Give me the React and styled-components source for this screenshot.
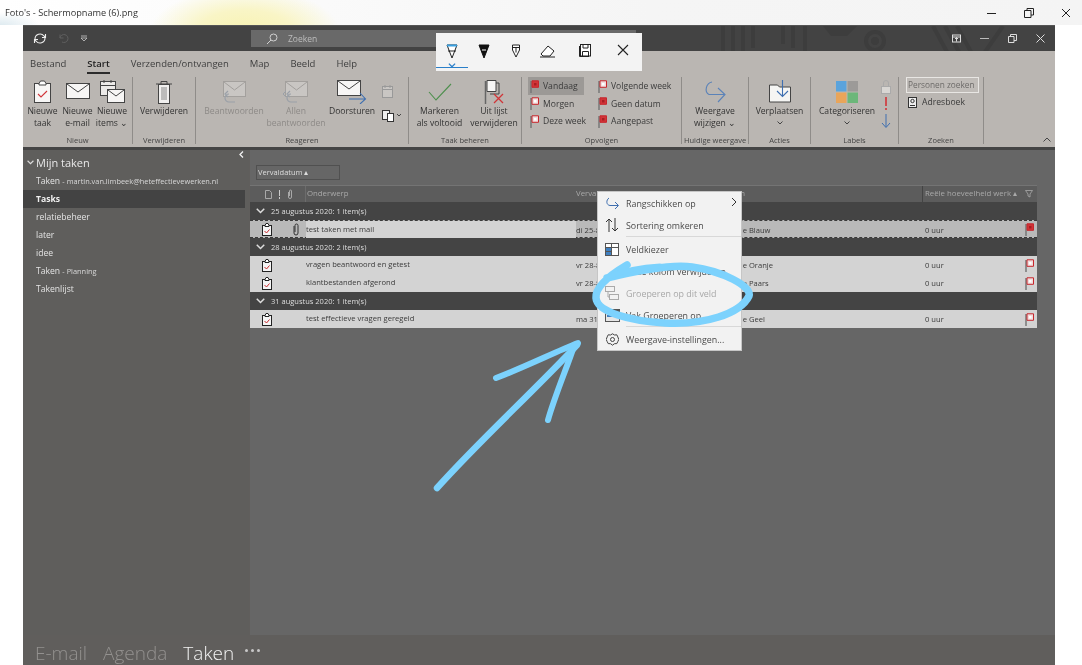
import React from "react";
import styled, { createGlobalStyle } from "styled-components";

const Global = createGlobalStyle`
  html, body { margin: 0; padding: 0; background: #fff; }
  body { font-family: "Open Sans", "Noto Sans", sans-serif; }
  svg { display: block; }
`;

const Page = styled.div`
  position: relative; width: 1082px; height: 665px; overflow: hidden; background: #fff;
  display: flex; flex-direction: column; filter: blur(0.3px);
`;
const TitleBar = styled.div`
  height: 25px; flex: none; display: flex; align-items: center; justify-content: space-between;
  padding: 0 11px 0 5px; color: #333; font-size: 9.2px; box-sizing: border-box;
  background:
    radial-gradient(ellipse 95px 44px at 245px 32px, #f8f3b2 0%, #f9f5c6 50%, rgba(255,255,255,0) 100%),
    radial-gradient(ellipse 40px 14px at 0 26px, #dce9ef, rgba(255,255,255,0)),
    linear-gradient(90deg, #fff, #f5f5f5 60%, #f4f4f4);
`;
const WinControls = styled.div`display: flex; gap: ${p => p.$gap}px; align-items: center;`;
const Outlook = styled.div`
  flex: 1; margin: 0 27px 0 23px; display: flex; flex-direction: column; min-height: 0; background: #605e5c;
`;
const Strip = styled.div`
  position: relative; height: 26px; flex: none; background: #434343; display: flex; align-items: center; overflow: hidden;
  border-top: 1px solid #555; box-sizing: border-box;
`;
const StripDecor = styled.svg`position: absolute; left: 660px; top: 0;`;
const Qat = styled.div`display: flex; align-items: center; gap: 11px; width: 228px; padding-left: 10px; box-sizing: border-box; flex: none;`;
const Search = styled.div`
  width: 385px; height: 17px; background: #696969; color: #bdbdbd; font-size: 8.5px; display: flex; align-items: center;
  padding-left: 15px; gap: 10px; box-sizing: border-box; flex: none; position: relative;
`;
const StripRight = styled.div`margin-left: auto; padding-right: 10px; display: flex; gap: 19px; align-items: center; position: relative;`;
const Tabs = styled.div`
  height: 25px; flex: none; background: #bab6b2; display: flex; align-items: center; padding-left: 7px; gap: 21px; font-size: 9.5px; color: #3a3a3a;
`;
const Tab = styled.div`
  position: relative; font-weight: ${p => p.$active ? 600 : 400}; color: ${p => p.$active ? "#222" : "#3e3e3e"};
  ${p => p.$active && `&::after { content: ""; position: absolute; left: 0; right: 0; bottom: -4px; height: 2px; background: #2b2b2b; }`}
`;
const Ribbon = styled.div`
  height: 71px; flex: none; background: #bab6b2; display: flex; position: relative; border-bottom: 3px solid #454545;
`;
const Group = styled.div`
  width: ${p => p.$w}px; flex: none; box-sizing: border-box; display: flex; flex-direction: column; margin: 1px 0 3px;
  border-right: 1px solid #8f8c89;
`;
const GroupBody = styled.div`
  flex: 1; display: flex; flex-direction: ${p => p.$col ? "column" : "row"}; padding-left: ${p => p.$pad || 0}px; min-height: 0;
`;
const GroupLabel = styled.div`height: 12px; text-align: center; font-size: 7.5px; line-height: 16px; color: #444; white-space: nowrap;`;
const BigBtn = styled.div`
  width: ${p => p.$w}px; flex: none; display: flex; flex-direction: column; align-items: center; text-align: center; margin-left: ${p => p.$ml || 0}px;
  color: ${p => p.$off ? "#8d8a87" : "#333"}; font-size: 8.6px; line-height: 12.5px; white-space: nowrap;
`;
const BigIcon = styled.div`height: 25.5px; padding-top: 2px; flex: none; display: flex; align-items: center; justify-content: center; box-sizing: content-box;`;
const Caret = styled.div`height: 12.5px; display: flex; align-items: center;`;
const SmallStack = styled.div`
  display: flex; flex-direction: column; align-items: ${p => p.$align || "flex-start"}; gap: ${p => p.$gap || 0}px; padding-top: ${p => p.$top || 0}px;
  ${p => p.$w ? `width: ${p.$w}px;` : ""}
`;
const FlagCols = styled.div`display: flex; padding-left: 6px; gap: 6px;`;
const FlagItem = styled.div`
  height: 18px; margin-bottom: -0.5px; display: flex; align-items: center; gap: 4px; font-size: 8.6px; color: #3a3a3a; white-space: nowrap;
  width: ${p => p.$w}px; padding-left: 2px; box-sizing: border-box;
  background: ${p => p.$on ? "#9c9996" : "transparent"};
`;
const PeopleBox = styled.div`
  width: 73px; height: 16px; margin: 0 0 0 7px; box-sizing: border-box; border: 1px solid #e8e6e3; background: #c0bcb8;
  color: #6d6b69; font-size: 8.3px; line-height: 14px; padding-left: 1px; white-space: nowrap; overflow: hidden;
`;
const AddrBook = styled.div`display: flex; gap: 5px; align-items: center; margin: 3px 0 0 9px; font-size: 8.6px; color: #3a3a3a;`;
const Collapse = styled.div`position: absolute; right: 4px; bottom: 5px;`;

const Body = styled.div`flex: 1; display: flex; min-height: 0;`;
const Nav = styled.nav`width: 226px; flex: none; background: #5f5e5c; color: #eee; position: relative; padding-top: 3px; margin-right: 1px;`;
const NavCollapse = styled.div`position: absolute; right: 5px; top: 1px;`;
const NavHead = styled.div`display: flex; align-items: center; gap: 2px; height: 19px; padding-left: 4px; font-size: 11px; color: #e8e8e8;`;
const NavItem = styled.div`
  height: 18px; line-height: 18px; padding-left: 13px; width: 222px; box-sizing: border-box; font-size: 8.6px; white-space: nowrap;
  background: ${p => p.$on ? "#434343" : "transparent"}; font-weight: ${p => p.$on ? 700 : 400};
  color: ${p => p.$on ? "#f0f0f0" : "#e4e4e4"};
`;
const NavSub = styled.span`font-size: 7.4px; color: #d8d8d8;`;
const Main = styled.main`flex: 1; background: #666; min-width: 0; padding-top: 15px;`;
const GroupBy = styled.div`
  margin-left: 6px; width: 84px; height: 15px; border: 1px solid #505050; box-sizing: border-box; color: #ddd; font-size: 7.5px; line-height: 13px; padding-left: 1px;
`;
const Table = styled.div`margin-top: 5px; width: 787px;`;
const cols = "56px 270px 137px 212px 100px 12px";
const HeadRow = styled.div`
  display: grid; grid-template-columns: ${cols}; height: 17px; align-items: center; background: #5c5c5c; border-top: 1px solid #747474; box-sizing: border-box;
  color: #a9a9a9; font-size: 7.8px;
`;
const HeadIcons = styled.div`display: flex; align-items: center; padding-left: 15px; gap: 6px; height: 100%; border-right: 1px solid #6c6c6c; box-sizing: border-box;`;
const HeadCell = styled.div`
  padding-left: ${p => p.$line ? 2 : p.$pad ?? 1}px; white-space: nowrap; height: 100%; line-height: 15px; box-sizing: border-box;
  margin-left: ${p => p.$ml || 0}px;
  ${p => p.$line ? "margin-left: -3px; border-left: 1px solid #444;" : ""}
`;
const DayRow = styled.div`
  height: 18px; background: #444; color: #dedede; font-size: 7.5px; display: flex; align-items: center; gap: 6px; padding-left: 6px;
`;
const TaskRow = styled.div`
  display: grid; grid-template-columns: ${cols}; height: 18px; box-sizing: border-box; align-items: center; background: ${p => p.$sel ? "#b9b9b9" : "#d3d3d3"}; color: #3a3a3a; font-size: 7.6px;
  ${p => p.$sel && "border-top: 1px dashed #3a3a3a; border-bottom: 1px dashed #3a3a3a;"}
`;
const Subject = styled.div`height: 100%; line-height: 17px; background: #d3d3d3; white-space: nowrap;`;
const Cell = styled.div`white-space: nowrap;`;
const RowIcons = styled.div`display: flex; align-items: center; padding-left: 12px; gap: 21px;`;
const FlagCell = styled.div`display: flex; justify-content: flex-end; padding-right: 3px;`;

const Bottom = styled.div`
  height: 30px; flex: none; background: #605e5c; display: flex; align-items: center; padding: 6px 0 0 12px; gap: 16px; font-size: 19px; font-weight: 300; box-sizing: border-box; color: #929190; overflow: hidden;
`;
const BottomItem = styled.div`color: ${p => p.$on ? "#f2f2f2" : "#93918f"}; line-height: 24px;`;
const MoreDots = styled.div`display: flex; gap: 3px; margin-left: -5px; margin-bottom: 5px;`;
const Dot = styled.span`width: 3px; height: 3px; border-radius: 50%; background: #c8c8c8;`;

const InkBar = styled.div`
  position: absolute; left: 436px; top: 33px; width: 206px; height: 38px; background: #f3f3f3; display: grid; grid-template-columns: 32px 32px 31px 32px 44px 32px 3px;
`;
const InkBtn = styled.div`
  position: relative; display: flex; justify-content: center; padding-top: 11px; box-sizing: border-box;
  ${p => p.$sel && `&::after { content: ""; position: absolute; left: 0; right: 0; bottom: 3px; height: 1px; background: #2a7fc9; }`}
`;
const InkCaret = styled.div`position: absolute; top: 30px; left: 12px;`;

const Menu = styled.div`
  position: absolute; left: 597px; top: 191px; width: 145px; height: 160px; background: #f2f2f2; border: 1px solid #c6c6c6; box-sizing: border-box;
  color: #4a4a4a; font-size: 8.9px;
`;
const MenuItem = styled.div`
  height: ${p => p.$h || 22}px; display: flex; align-items: center; color: ${p => p.$off ? "#a8a8a8" : "#4a4a4a"}; white-space: nowrap; position: relative;
`;
const MenuIcon = styled.div`width: 28px; flex: none; display: flex; justify-content: center;`;
const MenuSep = styled.div`height: 1px; margin: 0 0 1px 28px; background: #d8d8d8;`;
const MenuArrow = styled.div`position: absolute; right: 4px; top: 5px;`;
const Annotation = styled.svg`position: absolute; left: 0; top: 0; pointer-events: none;`;

const Ic = ({ w = 20, h = 20, children, vb }) => (
  <svg width={w} height={h} viewBox={vb || `0 0 ${w} ${h}`} fill="none">{children}</svg>
);
const Clipboard = () => (
  <Ic w={19} h={23}>
    <rect x="1.500" y="3.500" width="16" height="19" fill="#f7f6f5" stroke="#444" />
    <path d="M6 3.500 L7.500 1 h4 L13 3.500 v1.500 H6z" fill="#fff" stroke="#444" />
    <path d="M5 14 l3 3 l6-6" stroke="#d13438" strokeWidth="1.100" />
  </Ic>
);
const RowClip = () => (
  <Ic w={10} h={13}>
    <rect x=".5" y="2.500" width="9" height="10" fill="#f5f5f5" stroke="#222" />
    <path d="M3 2.500 L4 .5 h2 L7 2.500 v1 H3z" fill="#fff" stroke="#222" />
    <path d="M2.500 8l2 2 3-3.500" stroke="#c8282c" />
  </Ic>
);
const Mail = ({ off }) => (
  <Ic w={24} h={17}>
    <rect x=".5" y=".5" width="23" height="15" fill={off ? "#c9c6c3" : "#f7f6f5"} stroke={off ? "#a3a09d" : "#444"} />
    <path d="M1 1 L12 9 L23 1" stroke={off ? "#a3a09d" : "#444"} />
  </Ic>
);
const NewItems = () => (
  <Ic w={25} h={24}>
    <rect x=".5" y="1.500" width="15" height="14" fill="#eceae8" stroke="#444" />
    <path d="M.5 5.500h15M4 0v3M11 0v3" stroke="#444" />
    <rect x="7.500" y="9.500" width="17" height="13" fill="#f7f6f5" stroke="#444" />
    <path d="M8 10l8 6l8-6" stroke="#444" />
  </Ic>
);
const Trash = () => (
  <Ic w={18} h={24}>
    <path d="M1 4h16M6 4V1.500h6V4" stroke="#444" />
    <rect x="3.500" y="4.500" width="11" height="19" fill="#f0efee" stroke="#444" />
    <path d="M7 7v13M9 7v13M11 7v13" stroke="#888" />
  </Ic>
);
const Reply = ({ all }) => (
  <Ic w={26} h={24}>
    <rect x="2.500" y="1.500" width="22" height="15" fill="#c9c6c3" stroke="#a3a09d" />
    <path d="M3 2l10.500 8L24 2" stroke="#a3a09d" />
    <path d="M14 22 H8 a4 4 0 0 1 0-8 M7 11 L4 14 l3 3" stroke="#9aa0a8" strokeWidth="1.200" />
    {all && <path d="M3 11 l-3 3 l3 3" stroke="#9aa0a8" />}
  </Ic>
);
const Forward = () => (
  <Ic w={30} h={24}>
    <rect x=".5" y=".5" width="23" height="15" fill="#f7f6f5" stroke="#444" />
    <path d="M1 1l11 8l11-8" stroke="#444" />
    <path d="M12 19h16M23 13l5.500 6l-5.500 5" stroke="#3f6fb0" strokeWidth="1.100" />
  </Ic>
);
const Flag = ({ filled }) => (
  <Ic w={9} h={13}>
    <path d="M1 1v12" stroke="#777" strokeWidth="1.500" />
    <path d="M2 .8h6.500v6.500H2z" fill={filled ? "#d13438" : "#f0dcdc"} stroke="#c7262c" strokeWidth="1" />
    <path d="M4 3h2.500v2.500H4z" fill={filled ? "#a81e22" : "#fff"} />
  </Ic>
);
const Chev = ({ c = "#444", w = 6 }) => (
  <Ic w={w} h={Math.round(w * 0.67)} vb="0 0 6 4"><path d="M.5 .5 L3 3 L5.500 .5" stroke={c} /></Ic>
);

const rows = [
  { day: "25 augustus 2020: 1 item(s)", items: [{ s: "test taken met mail", d: "di 25-8-2020", c: "Categorie Blauw", sel: true, clip: true }] },
  { day: "28 augustus 2020: 2 item(s)", items: [
    { s: "vragen beantwoord en getest", d: "vr 28-8-2020", c: "Categorie Oranje" },
    { s: "klantbestanden afgerond", d: "vr 28-8-2020", c: "Categorie Paars" },
  ] },
  { day: "31 augustus 2020: 1 item(s)", items: [{ s: "test effectieve vragen geregeld", d: "ma 31-8-2020", c: "Categorie Geel" }] },
];

export default function App() {
  return (
    <>
      <Global />
      <Page>
        <TitleBar>
          <span>Foto's - Schermopname (6).png</span>
          <WinControls $gap={27}>
            <Ic w={10} h={10}><path d="M0 5.500h9" stroke="#222" /></Ic>
            <Ic w={10} h={10}><path d="M.5 2.500h6.500v7H.5zM3 2.500V.5h6.500v6.500H7" stroke="#222" /></Ic>
            <Ic w={10} h={10}><path d="M1 1l8 8M9 1l-8 8" stroke="#222" /></Ic>
          </WinControls>
        </TitleBar>
        <Outlook>
          <Strip>
            <StripDecor width="340" height="26" viewBox="0 0 340 26">
              <g stroke="#3d3d3d" strokeWidth="4" fill="none">
                <path d="M40 0v26M50 0v26M60 0v26M70 0v22M100 0v18M110 0v22M122 0v26" />
                <circle cx="192" cy="15" r="9" />
                <path d="M250 0l14 26M262 0l14 26M274 0l14 26M320 0l-18 26" />
              </g>
              <circle cx="192" cy="15" r="4" fill="#3d3d3d" />
              <path d="M140 0h34l-10 10h-16z" fill="#3d3d3d" />
            </StripDecor>
            <Qat>
              <Ic w={14} h={13}>
                <path d="M2 7a5 5 0 0 1 9-3l1.500 1.500M12 6a5 5 0 0 1-9 3L1.500 7.500M12.500 2v3.500H9M1.500 11V7.500H5" stroke="#eee" strokeWidth="1.100" />
              </Ic>
              <Ic w={11} h={11}><path d="M2 5a4 4 0 1 1 2 4M2 1.500v3.500h3.500" stroke="#5f5f5f" /></Ic>
              <Ic w={8} h={7}><path d="M1 1h6M1 3l3 3 3-3z" stroke="#c9c9c9" strokeWidth=".8" /></Ic>
            </Qat>
            <Search>
              <Ic w={12} h={12}><circle cx="7.500" cy="4.500" r="3.500" stroke="#d0d0d0" /><path d="M5 7L1 11" stroke="#d0d0d0" /></Ic>
              Zoeken
            </Search>
            <StripRight>
              <Ic w={9} h={9}><rect x=".5" y="1" width="8" height="7" stroke="#ddd" /><path d="M.5 3h8M4.500 7.500V3.500M3 5l1.500-1.500L6 5" stroke="#ddd" /></Ic>
              <Ic w={9} h={9}><path d="M0 4.500h9" stroke="#bbb" /></Ic>
              <Ic w={9} h={9}><path d="M.5 2.500h5.500v6H.5zM2.500 2.500V.5h6v6H6" stroke="#ddd" /></Ic>
              <Ic w={9} h={9}><path d="M.5.5l8 8M8.500.5l-8 8" stroke="#ddd" /></Ic>
            </StripRight>
          </Strip>
          <Tabs>
            <Tab>Bestand</Tab>
            <Tab $active>Start</Tab>
            <Tab>Verzenden/ontvangen</Tab>
            <Tab>Map</Tab>
            <Tab>Beeld</Tab>
            <Tab>Help</Tab>
          </Tabs>
          <Ribbon>
            <Group $w={110}>
              <GroupBody $pad={2}>
                <BigBtn $w={35}><BigIcon><Clipboard /></BigIcon>Nieuwe<br />taak</BigBtn>
                <BigBtn $w={35}><BigIcon><Mail /></BigIcon>Nieuwe<br />e-mail</BigBtn>
                <BigBtn $w={34}><BigIcon><NewItems /></BigIcon>Nieuwe<br /><span>items ⌄</span></BigBtn>
              </GroupBody>
              <GroupLabel>Nieuw</GroupLabel>
            </Group>
            <Group $w={63}>
              <GroupBody>
                <BigBtn $w={62}><BigIcon><Trash /></BigIcon>Verwijderen</BigBtn>
              </GroupBody>
              <GroupLabel>Verwijderen</GroupLabel>
            </Group>
            <Group $w={213}>
              <GroupBody $pad={2}>
                <BigBtn $w={72} $off><BigIcon><Reply /></BigIcon>Beantwoorden</BigBtn>
                <BigBtn $w={52} $off><BigIcon><Reply all /></BigIcon>Allen<br />beantwoorden</BigBtn>
                <BigBtn $w={60}><BigIcon><Forward /></BigIcon>Doorsturen</BigBtn>
                <SmallStack $top={8} $gap={11}>
                  <Ic w={12} h={13}><rect x=".5" y="1.500" width="10" height="11" fill="#c9c6c3" stroke="#999" /><path d="M.5 4.500h10M3 0v3M8 0v3" stroke="#999" /></Ic>
                  <Ic w={20} h={13}><rect x=".5" y="1.500" width="7" height="9" fill="#eee" stroke="#333" /><rect x="5.500" y="4.500" width="6" height="8" fill="#fff" stroke="#333" /><path d="M15 5l2 2 2-2" stroke="#444" /></Ic>
                </SmallStack>
              </GroupBody>
              <GroupLabel>Reageren</GroupLabel>
            </Group>
            <Group $w={113}>
              <GroupBody $pad={1}>
                <BigBtn $w={59}><BigIcon><Ic w={24} h={18}><path d="M1 9l7 8L23 1" stroke="#4d8f4d" strokeWidth="1.100" /></Ic></BigIcon>Markeren<br />als voltooid</BigBtn>
                <BigBtn $w={50}><BigIcon><Ic w={20} h={24}><path d="M1.500 1v23" stroke="#666" strokeWidth="1.500" /><path d="M3 .5h9v11H3z" fill="#f7f6f5" stroke="#444" /><path d="M12 3h3v11H6" stroke="#444" /><path d="M10 14l9 9M19 14l-9 9" stroke="#d13438" strokeWidth="1.300" /></Ic></BigIcon>Uit lijst<br />verwijderen</BigBtn>
              </GroupBody>
              <GroupLabel>Taak beheren</GroupLabel>
            </Group>
            <Group $w={160}>
              <GroupBody>
                <FlagCols>
                  <SmallStack>
                    <FlagItem $w={56} $on><Flag filled />Vandaag</FlagItem>
                    <FlagItem $w={56}><Flag />Morgen</FlagItem>
                    <FlagItem $w={62}><Flag />Deze week</FlagItem>
                  </SmallStack>
                  <SmallStack>
                    <FlagItem $w={80}><Flag />Volgende week</FlagItem>
                    <FlagItem $w={80}><Flag filled />Geen datum</FlagItem>
                    <FlagItem $w={80}><Flag filled />Aangepast</FlagItem>
                  </SmallStack>
                </FlagCols>
              </GroupBody>
              <GroupLabel>Opvolgen</GroupLabel>
            </Group>
            <Group $w={67}>
              <GroupBody>
                <BigBtn $w={66}><BigIcon><Ic w={24} h={24}><path d="M9 2C3 3 1 12 6 14.500 H21M15 8l7 6.500L15 22" stroke="#5a82b8" strokeWidth="1.100" /></Ic></BigIcon>Weergave<br /><span>wijzigen ⌄</span></BigBtn>
              </GroupBody>
              <GroupLabel>Huidige weergave</GroupLabel>
            </Group>
            <Group $w={62}>
              <GroupBody>
                <BigBtn $w={61}><BigIcon><Ic w={22} h={24}><path d="M.5 5h8l2 2h11v15H.5z" fill="#f5f5f3" stroke="#444" /><path d="M13.500 0v16M8 11l5.500 5.500L19 11" stroke="#3f6fb0" strokeWidth="1.100" /></Ic></BigIcon>Verplaatsen<Caret><Chev /></Caret></BigBtn>
              </GroupBody>
              <GroupLabel>Acties</GroupLabel>
            </Group>
            <Group $w={88}>
              <GroupBody>
                <BigBtn $w={64} $ml={4}><BigIcon><Ic w={22} h={22}><rect x="0" y="0" width="10.500" height="10.500" fill="#5aa3dc" /><rect x="11.500" y="0" width="10.500" height="10.500" fill="#9c9a98" /><rect x="0" y="11.500" width="10.500" height="10.500" fill="#e9a55a" /><rect x="11.500" y="11.500" width="10.500" height="10.500" fill="#6cb77a" /></Ic></BigIcon>Categoriseren<Caret><Chev /></Caret></BigBtn>
                <SmallStack $align="center" $top={3} $gap={3} $w={14}>
                  <Ic w={10} h={14}><rect x=".5" y="6.500" width="9" height="7" fill="#d8d6d3" stroke="#aaa" /><path d="M2.500 6.500V3a2.500 2.500 0 0 1 5 0v3.500" stroke="#aaa" /></Ic>
                  <Ic w={4} h={14}><path d="M2 0v9M2 11v2" stroke="#d13438" strokeWidth="1.600" /></Ic>
                  <Ic w={10} h={14}><path d="M5 0v13M1 9l4 4.500L9 9" stroke="#3f6fb0" /></Ic>
                </SmallStack>
              </GroupBody>
              <GroupLabel>Labels</GroupLabel>
            </Group>
            <Group $w={85}>
              <GroupBody $col>
                <PeopleBox>Personen zoeken</PeopleBox>
                <AddrBook>
                  <Ic w={9} h={11}><rect x=".5" y=".5" width="8" height="10" stroke="#333" fill="#eee" /><circle cx="4.500" cy="4" r="1.700" stroke="#333" /><path d="M2 8.500h5" stroke="#333" /></Ic>
                  Adresboek
                </AddrBook>
              </GroupBody>
              <GroupLabel>Zoeken</GroupLabel>
            </Group>
            <Collapse><Ic w={8} h={5}><path d="M.5 4.500L4 1l3.500 3.500" stroke="#444" /></Ic></Collapse>
          </Ribbon>
          <Body>
            <Nav>
              <NavCollapse><Ic w={5} h={7}><path d="M4 .5L1 3.500 4 6.500" stroke="#f2f2f2" strokeWidth="1.300" /></Ic></NavCollapse>
              <NavHead><Chev c="#ddd" w={7} />Mijn taken</NavHead>
              <NavItem>Taken <NavSub>- martin.van.limbeek@heteffectievewerken.nl</NavSub></NavItem>
              <NavItem $on>Tasks</NavItem>
              <NavItem>relatiebeheer</NavItem>
              <NavItem>later</NavItem>
              <NavItem>idee</NavItem>
              <NavItem>Taken <NavSub>- Planning</NavSub></NavItem>
              <NavItem>Takenlijst</NavItem>
            </Nav>
            <Main>
              <GroupBy>Vervaldatum ▴</GroupBy>
              <Table>
                <HeadRow>
                  <HeadIcons>
                    <Ic w={7} h={9}><path d="M.5.5h4l2 2v6h-6z" stroke="#a9a9a9" /></Ic>
                    <Ic w={3} h={9}><path d="M1.500 0v6M1.500 7v2" stroke="#ccc" /></Ic>
                    <Ic w={6} h={10} ><path d="M1.500 3v5a1.500 1.500 0 0 0 3 0V2a1 1 0 0 0-2 0v5" stroke="#a9a9a9" /></Ic>
                  </HeadIcons>
                  <HeadCell>Onderwerp</HeadCell>
                  <HeadCell $pad={0}>Vervaldatum</HeadCell>
                  <HeadCell $pad={0} $ml={-12}>Categorieën</HeadCell>
                  <HeadCell $line>Reële hoeveelheid werk ▴</HeadCell>
                  <HeadCell $pad={0}><Ic w={8} h={15}><path d="M.5 4.500h7L5 8v3L3 10V8z" stroke="#a9a9a9" strokeWidth=".8" /></Ic></HeadCell>
                </HeadRow>
                {rows.map(g => (
                  <React.Fragment key={g.day}>
                    <DayRow><Chev c="#ddd" w={9} />{g.day}</DayRow>
                    {g.items.map(t => (
                      <TaskRow key={t.s} $sel={t.sel}>
                        <RowIcons>
                          <RowClip />
                          {t.clip && <Ic w={6} h={13}><path d="M1 3v7a2 2 0 0 0 4 0V2.500a1.500 1.500 0 0 0-3 0V9" stroke="#333" /></Ic>}
                        </RowIcons>
                        <Subject>{t.s}</Subject>
                        <Cell>{t.d}</Cell>
                        <Cell>{t.c}</Cell>
                        <Cell>0 uur</Cell>
                        <FlagCell><Flag filled={t.sel} /></FlagCell>
                      </TaskRow>
                    ))}
                  </React.Fragment>
                ))}
              </Table>
            </Main>
          </Body>
          <Bottom>
            <BottomItem>E-mail</BottomItem>
            <BottomItem>Agenda</BottomItem>
            <BottomItem $on>Taken</BottomItem>
            <MoreDots><Dot /><Dot /><Dot /></MoreDots>
          </Bottom>
        </Outlook>

        <InkBar>
          <InkBtn $sel>
            <Ic w={12} h={16}><path d="M1 1h10L6 14z" fill="#fff" stroke="#222" /><path d="M1 1.500h10" stroke="#3aa0e0" strokeWidth="2" /><path d="M2 7h8" stroke="#222" /></Ic>
            <InkCaret><Chev c="#2a7fc9" w={8} /></InkCaret>
          </InkBtn>
          <InkBtn><Ic w={12} h={16}><path d="M1 1h10L6 14z" fill="#111" stroke="#111" /><path d="M4 6h4" stroke="#fff" /></Ic></InkBtn>
          <InkBtn><Ic w={8} h={14}><path d="M.5 1h7v5L4 13 .5 6z" fill="#fff" stroke="#222" /><path d="M.5 3.500h7M4 3.500v5" stroke="#222" /></Ic></InkBtn>
          <InkBtn><Ic w={15} h={14}><path d="M1 10L8 2l6 5-4 5H3z" fill="#fff" stroke="#222" /><path d="M0 13h15" stroke="#222" /></Ic></InkBtn>
          <InkBtn><Ic w={12} h={13}><rect x="1.500" y=".5" width="10" height="11.500" fill="#fff" stroke="#222" /><path d="M.5 2v10.500H10" stroke="#222" /><path d="M4 .5v3.500h5V.5M3.500 12V7.500h6V12" stroke="#222" /></Ic></InkBtn>
          <InkBtn><Ic w={12} h={12}><path d="M1 1l10 10M11 1L1 11" stroke="#222" strokeWidth="1.100" /></Ic></InkBtn>
        </InkBar>

        <Menu>
          <MenuItem>
            <MenuIcon><Ic w={13} h={12}><path d="M3 1C0 3 0 8 4 8.500h8M9 5l3.500 3.500L9 12" stroke="#3f6fb0" /></Ic></MenuIcon>
            Rangschikken op
            <MenuArrow><Ic w={6} h={10}><path d="M1 1l4 4-4 4" stroke="#333" /></Ic></MenuArrow>
          </MenuItem>
          <MenuItem>
            <MenuIcon><Ic w={14} h={14}><path d="M4 14V1M1 4l3-3 3 3" stroke="#333" /><path d="M10 0v13M7 10l3 3 3-3" stroke="#333" /></Ic></MenuIcon>
            Sortering omkeren
          </MenuItem>
          <MenuSep />
          <MenuItem>
            <MenuIcon><Ic w={14} h={13}><rect x=".5" y=".5" width="13" height="12" fill="#fff" stroke="#555" /><path d="M.5 4.500h13M6.500.5v12M.5 8.500h6" stroke="#555" /><rect x="1" y="5" width="5" height="3" fill="#3f7fc0" /><rect x="1" y="9" width="5" height="3" fill="#3f7fc0" /></Ic></MenuIcon>
            Veldkiezer
          </MenuItem>
          <MenuItem>
            <MenuIcon />
            Deze kolom verwijderen
          </MenuItem>
          <MenuItem $off>
            <MenuIcon><Ic w={14} h={14}><rect x=".5" y=".5" width="9" height="5" stroke="#aaa" /><rect x="4.500" y="8.500" width="9" height="5" stroke="#aaa" /><path d="M3 6v5h1.500" stroke="#aaa" /></Ic></MenuIcon>
            Groeperen op dit veld
          </MenuItem>
          <MenuItem>
            <MenuIcon><Ic w={15} h={13}><rect x=".5" y=".5" width="14" height="12" fill="#e6e6e6" stroke="#555" /><rect x="1" y="1" width="13" height="3" fill="#555" /><rect x="2" y="6" width="11" height="2" fill="#3f7fc0" /></Ic></MenuIcon>
            Vak Groeperen op
          </MenuItem>
          <MenuSep />
          <MenuItem>
            <MenuIcon><Ic w={13} h={13}><path d="M6.500.8l2 1.200 2.300-.2 1 2.100 1 2.600-1 2.100-1 2-2.300.1-2 1.500-2-1.500-2.300-.1-1-2-1-2.100 1-2.600 1-2.100 2.300.2z" stroke="#444" /><circle cx="6.500" cy="6.500" r="2" stroke="#444" /></Ic></MenuIcon>
            Weergave-instellingen...
          </MenuItem>
        </Menu>

        <Annotation width="1082" height="665" viewBox="0 0 1082 665" fill="none" stroke="#7cd2fd" strokeLinecap="round" strokeLinejoin="round">
          <path d="M607 278C640 270 672 264 692 267C722 271 752 286 749 296C740 314 705 325 665 323C630 321 597 312 596 298C595 287 610 275 627 265" strokeWidth="7.500" />
          <path d="M608 277C625 270 640 267 660 266" strokeWidth="5" />
          <path d="M437 488C480 440 530 395 577 345" strokeWidth="6.500" />
          <path d="M496 378C525 367 555 352 578 343" strokeWidth="6" />
          <path d="M548 420C555 395 568 365 574 346" strokeWidth="6" />
        </Annotation>
      </Page>
    </>
  );
}
